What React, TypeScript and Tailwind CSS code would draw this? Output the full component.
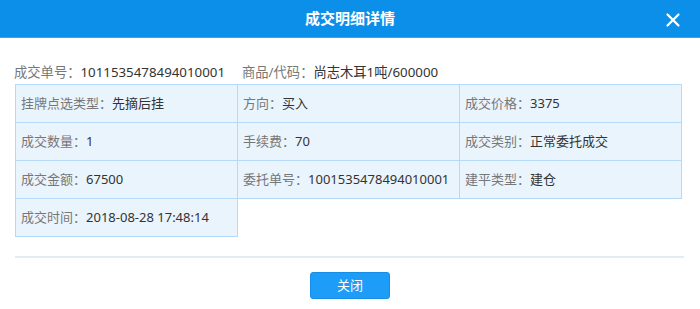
import { X } from 'lucide-react'

const font = { fontFamily: '"Noto Sans", "Noto Sans CJK SC", sans-serif' }

const cells: [string, string][][] = [
  [
    ['挂牌点选类型：', '先摘后挂'],
    ['方向：', '买入'],
    ['成交价格：', '3375'],
  ],
  [
    ['成交数量：', '1'],
    ['手续费：', '70'],
    ['成交类别：', '正常委托成交'],
  ],
  [
    ['成交金额：', '67500'],
    ['委托单号：', '1001535478494010001'],
    ['建平类型：', '建仓'],
  ],
  [['成交时间：', '2018-08-28 17:48:14']],
]

function Cell({ label, value }: { label: string; value: string }): React.JSX.Element {
  return (
    <div className="h-[39px] flex items-center pl-[5px] bg-[#eaf4fd] border border-[#b5d9f8] -ml-px -mt-px whitespace-nowrap">
      <span className="text-[#777]">{label}</span>
      <span className="text-[#333]">{value}</span>
    </div>
  )
}

export default function App(): React.JSX.Element {
  return (
    <div className="w-[700px] h-[309px] bg-white text-[13px] overflow-hidden" style={font}>
      {/* Header */}
      <div className="relative h-[38px] bg-[#0c8fe9] border-b border-[#3aa4ee] flex items-center justify-center">
        <h3 className="text-white text-[15px] font-bold">成交明细详情</h3>
        <button className="absolute right-[16px] top-[9px] text-white">
          <X size={22} strokeWidth={2.5} />
        </button>
      </div>

      {/* Content */}
      <div className="px-[15px]">
        <div className="h-[46px] pt-[24px] flex items-center text-[13.3px]">
          <span className="text-[#777] -ml-px">成交单号：</span>
          <span className="text-[#333]">1011535478494010001</span>
          <span className="text-[#777] ml-[17px]">商品/代码：</span>
          <span className="text-[#333]">尚志木耳1吨/600000</span>
        </div>

        <div className="grid grid-cols-[222px_222px_222px] pl-px pt-px">
          {cells.flat().map(([label, value]) => (
            <Cell key={label} label={label} value={value} />
          ))}
        </div>

        <div className="mt-[19px] h-[2px] bg-[#e2ecf4] mr-[1px]" />

        <div className="flex justify-center pt-[14px]">
          <button className="w-[80px] h-[27px] rounded-[3px] bg-[#1d9df7] border border-[#168ee6] text-white text-[13px]">
            关闭
          </button>
        </div>
      </div>
    </div>
  )
}
